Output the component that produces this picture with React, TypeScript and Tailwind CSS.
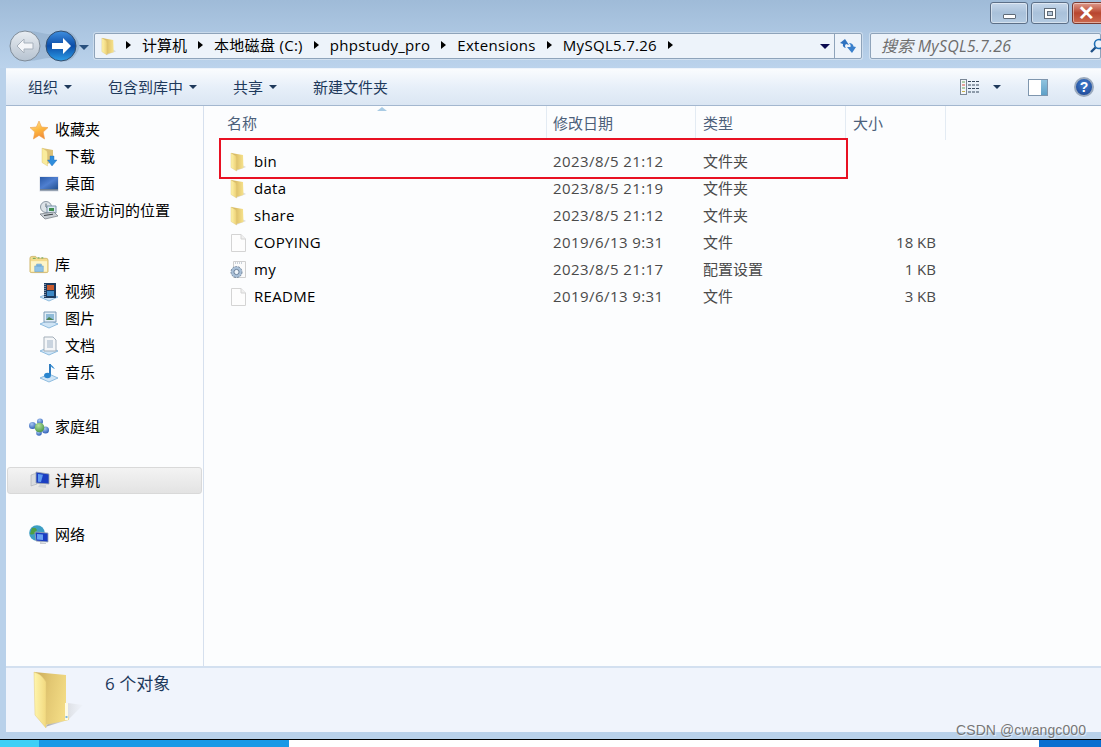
import React from "react";

const F = "font-['Open_Sans','Noto_Sans_CJK_SC',sans-serif]";

function Folder({ w = 18, h = 20, id }: { w?: number; h?: number; id: string }) {
  return (
    <svg width={w} height={h} viewBox="0 0 18 20">
      <defs>
        <linearGradient id={id} x1="0" y1="0" x2="1" y2="0">
          <stop offset="0" stopColor="#fff4ab" />
          <stop offset="1" stopColor="#eccf74" />
        </linearGradient>
        <linearGradient id={id + "b"} x1="0" y1="0" x2="1" y2="0">
          <stop offset="0" stopColor="#c9a853" />
          <stop offset="0.6" stopColor="#e6cb74" />
          <stop offset="1" stopColor="#f7e38d" />
        </linearGradient>
      </defs>
      <path d="M7 19 L17 15 L13 13 L7 15 Z" fill="#bdbdbd" opacity="0.55" />
      <path d="M2 1 L14 3 L14.500 16 L7 18 Z" fill={`url(#${id}b)`} />
      <path d="M2 1 L7 4 L7.500 7 L7.500 19 L2 15.500 Z" fill={`url(#${id})`} stroke="#dcc477" strokeWidth="0.4" />
    </svg>
  );
}

function BigFolder() {
  return (
    <svg width="54" height="60" viewBox="0 0 54 60">
      <defs>
        <linearGradient id="bfa" x1="0" y1="0" x2="1" y2="0">
          <stop offset="0" stopColor="#fff6ad" />
          <stop offset="1" stopColor="#f2d97f" />
        </linearGradient>
        <linearGradient id="bfb" x1="0" y1="0" x2="1" y2="0.3">
          <stop offset="0" stopColor="#c8a958" />
          <stop offset="0.5" stopColor="#e3c873" />
          <stop offset="1" stopColor="#f3dc85" />
        </linearGradient>
        <linearGradient id="bfs" x1="0" y1="0" x2="1" y2="0">
          <stop offset="0" stopColor="#8f8f8f" stopOpacity="0.75" />
          <stop offset="1" stopColor="#cfcfcf" stopOpacity="0.05" />
        </linearGradient>
      </defs>
      <path d="M13 57 L36 50 L51 35 L36 33 Z" fill="url(#bfs)" />
      <path d="M2 2 L34 5 L34 33 L37 50 L13 55 Z" fill="url(#bfb)" />
      <path d="M2 2 Q9 4 12 9 L14 12 L14 58 L3 45 Z" fill="url(#bfa)" stroke="#e3ca7b" strokeWidth="0.5" />
      <rect x="33" y="33" width="3" height="17" fill="#fdfbe6" />
      <rect x="33.500" y="46" width="2" height="2" fill="#7fb6e0" />
    </svg>
  );
}

function FileIcon() {
  return (
    <svg width="16" height="18" viewBox="0 0 16 18">
      <path d="M1.500 .5 H11 L15.500 5 V17.500 H1.500 Z" fill="#fdfdfd" stroke="#d4d4d4" />
      <path d="M11 .5 V5 H15.500" fill="#f0f0f0" stroke="#d4d4d4" />
    </svg>
  );
}

function ConfigIcon() {
  return (
    <svg width="18" height="18" viewBox="0 0 18 18">
      <path d="M4.500 .5 H16.500 V16.500 H4.500 Z" fill="#fbfbfb" stroke="#cfcfcf" />
      <path d="M6 2 h8" stroke="#9aa8b8" strokeDasharray="1 1" />
      <circle cx="7.500" cy="11" r="5.500" fill="#a9c0d8" stroke="#74889e" strokeDasharray="2 1" />
      <circle cx="7.500" cy="11" r="2.600" fill="#eef4fa" stroke="#6c819a" />
    </svg>
  );
}

function Star() {
  return (
    <svg width="20" height="20" viewBox="0 0 20 20">
      <defs>
        <linearGradient id="star" x1="0" y1="0" x2="0.4" y2="1">
          <stop offset="0" stopColor="#ffe9a0" />
          <stop offset="0.6" stopColor="#fdb63f" />
          <stop offset="1" stopColor="#f2903a" />
        </linearGradient>
      </defs>
      <path d="M10 1 L12.600 7 L19 7.600 L14.200 12 L15.600 19 L10 15.400 L4.400 19 L5.800 12 L1 7.600 L7.400 7 Z" fill="url(#star)" stroke="#ef9f4d" strokeWidth="0.6" />
    </svg>
  );
}

function DownloadIcon() {
  return (
    <svg width="18" height="20" viewBox="0 0 18 20">
      <path d="M2 1 L13 3 L13 15 L7 17 Z" fill="#dcc177" />
      <path d="M2 1 L7 4 L7.500 7 L7.500 19 L2 15.500 Z" fill="#f9eb9c" stroke="#d9bf6d" strokeWidth="0.4" />
      <path d="M10 9 H14 V13 H17 L12 19 L7.500 13 H10 Z" fill="#2f8ddc" stroke="#1c6cb8" strokeWidth="0.4" />
    </svg>
  );
}

function Desktop() {
  return (
    <svg width="20" height="16" viewBox="0 0 20 16">
      <defs>
        <linearGradient id="dsk" x1="0" y1="0" x2="1" y2="1">
          <stop offset="0" stopColor="#2a5aa8" />
          <stop offset="0.5" stopColor="#4f7fd0" />
          <stop offset="1" stopColor="#24518f" />
        </linearGradient>
      </defs>
      <rect x="0.5" y="0.5" width="19" height="15" fill="#d5dbe4" />
      <rect x="1" y="1" width="18" height="12" fill="url(#dsk)" />
      <rect x="1" y="13" width="18" height="1.600" fill="#6f7f93" />
    </svg>
  );
}

function Recent() {
  return (
    <svg width="20" height="20" viewBox="0 0 20 20">
      <circle cx="7" cy="6" r="5.500" fill="#dde3e8" stroke="#8c98a3" />
      <path d="M7 2.500 V6 L9.500 7.500" stroke="#56636f" fill="none" />
      <path d="M8 5 H17 V12 H8 Z" fill="#dbe8f3" stroke="#7c93aa" />
      <path d="M10 7 H15 V10 H10 Z" fill="#3f8f4f" />
      <path d="M1 13 L15 11 L19 15 L6 18 Z" fill="#c8ced4" stroke="#70777e" strokeWidth="0.7" />
      <path d="M5 14.500 L14 13.200" stroke="#3a3f44" />
    </svg>
  );
}

function Library() {
  return (
    <svg width="21" height="19" viewBox="0 0 21 19">
      <path d="M1 3 Q1 1 3 1 H7 L9 3 H18 Q20 3 20 5 V17 Q20 18 18 18 H3 Q1 18 1 17 Z" fill="#f4dc8e" stroke="#c9ad5f" strokeWidth="0.8" />
      <path d="M4 3 h3 M9 2.500 h2 M13 2.500 h2" stroke="#7fae5f" strokeWidth="1.400" />
      <path d="M2 6 H19 V17 H2 Z" fill="#fdf5c9" />
      <path d="M6 11 H15 V17 H6 Z M8 9 H13 V11 H8 Z" fill="#8fc3e8" stroke="#5d97c4" strokeWidth="0.5" />
    </svg>
  );
}

function Plate() {
  return <path d="M1 15 L10 11 L19 15 L10 19 Z" fill="#cfe4f5" stroke="#78aed8" strokeWidth="0.8" />;
}

function Videos() {
  return (
    <svg width="20" height="20" viewBox="0 0 20 20">
      <Plate />
      <rect x="5" y="1" width="12" height="15" fill="#1c3a5e" />
      <rect x="8" y="3" width="7" height="5" fill="#c95b2e" />
      <rect x="8" y="9" width="7" height="5" fill="#3d89c6" />
      <path d="M6 2 v13" stroke="#dde6ef" strokeDasharray="1 1" />
    </svg>
  );
}

function Pictures() {
  return (
    <svg width="20" height="20" viewBox="0 0 20 20">
      <Plate />
      <path d="M5 3 H17 V13 H5 Z" fill="#e3eef7" stroke="#7f9cb8" />
      <path d="M7 5 H15 V11 H7 Z" fill="#8fbbd8" />
      <path d="M7 11 L10 8 L15 11 Z" fill="#4b8253" />
    </svg>
  );
}

function Docs() {
  return (
    <svg width="20" height="20" viewBox="0 0 20 20">
      <Plate />
      <path d="M5 1 H14 L17 4 V15 H5 Z" fill="#f4f6f8" stroke="#a4afba" />
      <path d="M8 5 h6 M8 7 h6 M8 9 h6 M8 11 h6" stroke="#9fb2c6" />
    </svg>
  );
}

function Music() {
  return (
    <svg width="20" height="20" viewBox="0 0 20 20">
      <Plate />
      <path d="M11 1 V12" stroke="#1b6fb8" strokeWidth="1.800" />
      <path d="M11 1 Q12 5 16 6 Q14 3 11 1" fill="#2a86cf" />
      <ellipse cx="8.500" cy="12.500" rx="3.400" ry="2.800" fill="#2a86cf" />
    </svg>
  );
}

function Homegroup() {
  return (
    <svg width="20" height="18" viewBox="0 0 20 18">
      <defs>
        <radialGradient id="hgb" cx="0.4" cy="0.3" r="0.8">
          <stop offset="0" stopColor="#a9c8f2" />
          <stop offset="1" stopColor="#1f52b0" />
        </radialGradient>
        <radialGradient id="hgg" cx="0.4" cy="0.3" r="0.8">
          <stop offset="0" stopColor="#b5e0a0" />
          <stop offset="1" stopColor="#3f8f3e" />
        </radialGradient>
      </defs>
      <circle cx="11" cy="3.500" r="3" fill="url(#hgb)" />
      <circle cx="3.500" cy="7.500" r="3.500" fill="url(#hgb)" />
      <circle cx="16.500" cy="12" r="3.500" fill="url(#hgb)" />
      <circle cx="10" cy="15" r="2.800" fill="url(#hgb)" />
      <circle cx="10.500" cy="9.500" r="4.800" fill="url(#hgg)" />
    </svg>
  );
}

function Computer() {
  return (
    <svg width="20" height="20" viewBox="0 0 20 20">
      <path d="M1 4 L7 2 V13 L1 15 Z" fill="#d9dcdf" stroke="#a8adb2" strokeWidth="0.6" />
      <path d="M6 1 L19 3 V13 L6 12 Z" fill="#1a3ec2" stroke="#9aa3ab" strokeWidth="0.8" />
      <path d="M8 3 L13 3.800 L11 11 L8 10.800 Z" fill="#5f9af0" />
      <path d="M10 13 L16 14 V17 L8 16 Z" fill="#cfd3d7" />
    </svg>
  );
}

function Network() {
  return (
    <svg width="20" height="20" viewBox="0 0 20 20">
      <circle cx="8" cy="8" r="7.800" fill="#3d9ec4" />
      <path d="M3 3 Q7 2 8 5 Q5 11 1 9 Z" fill="#4f9f44" />
      <path d="M6 7 L19 8 V17 L7 16 Z" fill="#1a3ec2" stroke="#a2abb2" strokeWidth="0.8" />
      <path d="M8 9 L14 9.400 V15 L8 14.600 Z" fill="#6aa2f2" />
      <path d="M11 17 L17 18 V19 L11 19 Z" fill="#c9cdd1" />
    </svg>
  );
}

function Caret({ c = "#1e395b" }: { c?: string }) {
  return <span className="inline-block w-0 h-0 border-x-[4px] border-x-transparent border-t-[4px]" style={{ borderTopColor: c }} />;
}

function Crumb({ children, latin }: { children?: React.ReactNode; latin?: boolean }) {
  return (
    <>
      <span className="w-0 h-0 border-y-[4.5px] border-y-transparent border-l-[5px] border-l-black mx-[11px]" />
      {children && <span className={`text-[15px] text-black ${latin ? "tracking-[0.3px]" : ""}`}>{children}</span>}
    </>
  );
}

function NavButtons() {
  return (
    <svg width="88" height="36" viewBox="0 0 88 36" className="shrink-0">
      <defs>
        <linearGradient id="back" x1="0" y1="0" x2="0" y2="1">
          <stop offset="0" stopColor="#e8edf2" />
          <stop offset="0.5" stopColor="#cfd7e0" />
          <stop offset="1" stopColor="#b6c3d1" />
        </linearGradient>
        <linearGradient id="fwd" x1="0" y1="0" x2="0" y2="1">
          <stop offset="0" stopColor="#3f8fe0" />
          <stop offset="0.5" stopColor="#0c4da8" />
          <stop offset="1" stopColor="#2d9ee8" />
        </linearGradient>
      </defs>
      <path d="M8 5 Q18 1 34 5 Q44 8 52 3 Q66 0 72 18 Q66 36 52 33 Q44 28 34 31 Q18 35 8 31 Z" fill="#8ea9c6" opacity="0.55" />
      <circle cx="17" cy="18" r="15" fill="url(#back)" stroke="#7f8c99" />
      <path d="M9 18 L16 11 V15 H25 V21 H16 V25 Z" fill="#f4f6f9" stroke="#a7b1bc" />
      <circle cx="53" cy="18" r="15" fill="url(#fwd)" stroke="#35506f" />
      <path d="M63 18 L55 10 V15 H44 V21 H55 V26 Z" fill="#fff" />
      <path d="M71 17 H81 L76 22 Z" fill="#29517f" />
    </svg>
  );
}

function Refresh() {
  return (
    <svg width="18" height="16" viewBox="0 0 18 16">
      <path d="M6 1 L1 5 L4 6 Q3 9 7 10 Q5 8 7 6 L10 7 Z" fill="#2f72bf" />
      <path d="M13 15 L17 9 L14.500 8.500 Q14 5 10 5 Q12.500 7 11.500 9 L8 9 Z" fill="#3a80cc" />
    </svg>
  );
}

function SearchIcon() {
  return (
    <svg width="14" height="16" viewBox="0 0 14 16">
      <circle cx="9" cy="6" r="4.500" fill="#eaf2fa" stroke="#1f6fb5" strokeWidth="1.600" />
      <path d="M5.500 9.500 L1 14" stroke="#1f4f85" strokeWidth="2.400" />
    </svg>
  );
}

function WinBtn({ children, cls }: { children: React.ReactNode; cls: string }) {
  return <div className={`h-[22px] rounded-[3px] border border-[#5c6f87] flex items-center justify-center shadow-[inset_0_0_0_1px_rgba(255,255,255,0.45)] ${cls}`}>{children}</div>;
}

function ToolItem({ label, caret = true, cls }: { label: string; caret?: boolean; cls: string }) {
  return (
    <span className={`flex items-center gap-[6px] text-[15px] text-[#1e395b] ${cls}`}>
      {label}
      {caret && <Caret />}
    </span>
  );
}

function Nav({ icon, label, indent, selected }: { icon: React.ReactNode; label: string; indent?: boolean; selected?: boolean }) {
  return (
    <div
      className={`h-[27px] flex items-center text-[15px] text-black ${
        selected ? "mx-[1px] rounded-[3px] border border-[#d9d9d9] bg-gradient-to-b from-[#f3f3f3] to-[#e3e3e3] pl-[22px]" : indent ? "pl-[33px]" : "pl-[23px]"
      }`}
    >
      <span className="w-[20px] h-[20px] flex items-center justify-center shrink-0">{icon}</span>
      <span className={indent || !selected ? "ml-[6px]" : "ml-[5px]"}>{label}</span>
    </div>
  );
}

const rows = [
  { icon: <Folder id="f1" />, name: "bin", date: "2023/8/5 21:12", type: "文件夹", size: "" },
  { icon: <Folder id="f2" />, name: "data", date: "2023/8/5 21:19", type: "文件夹", size: "" },
  { icon: <Folder id="f3" />, name: "share", date: "2023/8/5 21:12", type: "文件夹", size: "" },
  { icon: <FileIcon />, name: "COPYING", date: "2019/6/13 9:31", type: "文件", size: "18 KB" },
  { icon: <ConfigIcon />, name: "my", date: "2023/8/5 21:17", type: "配置设置", size: "1 KB" },
  { icon: <FileIcon />, name: "README", date: "2019/6/13 9:31", type: "文件", size: "3 KB" },
];

function Head({ label, w, pl }: { label: string; w: string; pl: string }) {
  return <div className={`${w} ${pl} h-[34px] flex items-center border-r border-[#e3ebf3] text-[15px] text-[#4c607a]`}>{label}</div>;
}

export default function App() {
  return (
    <div className={`relative w-[1101px] h-[747px] overflow-hidden flex flex-col bg-[#b9d1ea] ${F}`}>
      <div className="h-[68px] shrink-0 bg-gradient-to-b from-[#9fbbd8] to-[#bbd3ec] flex flex-col">
        <div className="h-[33px] shrink-0 flex justify-end gap-[3px] pt-[2px] -mr-[6px]">
          <WinBtn cls="w-[38px] bg-gradient-to-b from-[#c6d7ea] via-[#a9c1da] to-[#b4cbe2]">
            <span className="mt-[7px] w-[13px] h-[5px] rounded-[1px] bg-white border border-[#5f6b78]" />
          </WinBtn>
          <WinBtn cls="w-[38px] bg-gradient-to-b from-[#c6d7ea] via-[#a9c1da] to-[#b4cbe2]">
            <span className="w-[12px] h-[11px] bg-white border border-[#5f6b78] flex items-center justify-center">
              <span className="w-[6px] h-[5px] bg-[#b6c8da] border border-[#5f6b78]" />
            </span>
          </WinBtn>
          <WinBtn cls="w-[35px] border-[#7a3a30] bg-gradient-to-b from-[#dd9a8c] via-[#b8452e] to-[#cc6a50]">
            <span className="text-white text-[20px] leading-none font-bold -ml-[6px] font-['Liberation_Sans',sans-serif]">✕</span>
          </WinBtn>
        </div>
        <div className="flex items-start h-[26px] pl-[8px]">
          <div className="-mt-[5px]">
            <NavButtons />
          </div>
          <div className="ml-[-2px] w-[768px] h-[26px] rounded-[2px] border border-[#8ea3ba] bg-[#edf3fa] flex items-center pl-[5px] shadow-[0_0_0_1px_rgba(255,255,255,0.35)]">
            <Folder id="fa" w={17} h={19} />
            <span className="flex items-center -ml-[2px] pb-[2px]">
              <Crumb>计算机</Crumb>
              <Crumb latin>本地磁盘 (C:)</Crumb>
              <Crumb latin>phpstudy_pro</Crumb>
              <Crumb latin>Extensions</Crumb>
              <Crumb latin>MySQL5.7.26</Crumb>
              <Crumb />
            </span>
            <span className="ml-auto flex items-center h-full">
              <span className="w-0 h-0 border-x-[5px] border-x-transparent border-t-[5px] border-t-[#0a0a50] mr-[4px]" />
              <span className="w-[27px] h-full border-l border-[#8ea3ba] flex items-center justify-center">
                <Refresh />
              </span>
            </span>
          </div>
          <div className="ml-[8px] flex-1 h-[26px] rounded-[2px] border border-[#8ea3ba] bg-[#edf3fa] flex items-center pl-[10px] pr-0 shadow-[0_0_0_1px_rgba(255,255,255,0.35)]">
            <span className="italic text-[16px] text-[#6d6d6d] tracking-[0.2px]">搜索 MySQL5.7.26</span>
            <span className="ml-auto -mr-[4px]">
              <SearchIcon />
            </span>
          </div>
        </div>
      </div>

      <div className="flex-1 flex flex-col pl-[6px] min-h-0">
        <div className="h-[38px] shrink-0 bg-gradient-to-b from-[#fafcfe] via-[#e7eff9] to-[#dbe6f3] border-t border-t-[#eef4fb] border-b border-b-[#a3b7cf] flex items-center">
          <ToolItem label="组织" cls="ml-[22px]" />
          <ToolItem label="包含到库中" cls="ml-[36px]" />
          <ToolItem label="共享" cls="ml-[36px]" />
          <ToolItem label="新建文件夹" caret={false} cls="ml-[36px]" />
          <div className="ml-auto flex items-center">
            <svg width="20" height="16" viewBox="0 0 20 16">
              <rect x="0.5" y="0.5" width="6" height="15" fill="#f3f6f9" stroke="#7a8796" />
              <path d="M2 3 h3" stroke="#6ea85f" />
              <path d="M2 6 h3" stroke="#d9503f" />
              <path d="M2 9 h3" stroke="#6ea85f" />
              <path d="M2 12.500 h3" stroke="#c5b04d" />
              <path d="M8 2.500 h12 M8 6 h12 M8 9.500 h12 M8 13 h12" stroke="#37485c" strokeDasharray="3 1" />
            </svg>
            <span className="ml-[13px] flex"><Caret /></span>
            <span className="ml-[27px] w-[20px] h-[17px] border border-[#7f96ae] bg-white flex justify-end">
              <span className="w-[6px] bg-gradient-to-b from-[#8fc3de] to-[#5ea0c8]" />
            </span>
            <span className="ml-[26px] mr-[7px] w-[20px] h-[20px] rounded-full bg-[radial-gradient(circle_at_50%_35%,#3f7fd0,#1b3f8c)] border-2 border-[#9aa9bd] text-white text-[14px] font-bold leading-none flex items-center justify-center font-['Liberation_Sans',sans-serif]">?</span>
          </div>
        </div>

        <div className="flex-1 min-h-0 flex bg-[#fcfdfe]">
          <div className="w-[198px] shrink-0 border-r border-[#d6e0ee] pt-[10px]">
            <Nav icon={<Star />} label="收藏夹" />
            <Nav icon={<DownloadIcon />} label="下载" indent />
            <Nav icon={<Desktop />} label="桌面" indent />
            <Nav icon={<Recent />} label="最近访问的位置" indent />
            <div className="h-[27px]" />
            <Nav icon={<Library />} label="库" />
            <Nav icon={<Videos />} label="视频" indent />
            <Nav icon={<Pictures />} label="图片" indent />
            <Nav icon={<Docs />} label="文档" indent />
            <Nav icon={<Music />} label="音乐" indent />
            <div className="h-[27px]" />
            <Nav icon={<Homegroup />} label="家庭组" />
            <div className="h-[27px]" />
            <Nav icon={<Computer />} label="计算机" selected />
            <div className="h-[27px]" />
            <Nav icon={<Network />} label="网络" />
          </div>
          <div className="flex-1 min-w-0 pl-[16px]">
            <div className="relative flex">
              <Head label="名称" w="w-[327px]" pl="pl-[7px]" />
              <Head label="修改日期" w="w-[149px]" pl="pl-[6px]" />
              <Head label="类型" w="w-[150px]" pl="pl-[7px]" />
              <Head label="大小" w="w-[100px]" pl="pl-[7px]" />
              <span className="absolute left-[157px] top-[1px] w-0 h-0 border-x-[5px] border-x-transparent border-b-[4px] border-b-[#a9cbe4]" />
            </div>
            <div className="pt-[8px]">
              {rows.map((r) => (
                <div key={r.name} className="h-[27px] flex items-center text-[15px] text-black">
                  <div className="w-[327px] flex items-center pl-[9px]">
                    <span className="w-[18px] h-[20px] flex items-center justify-center">{r.icon}</span>
                    <span className="ml-[7px] tracking-[0.3px]">{r.name}</span>
                  </div>
                  <div className="w-[150px] pl-[6px] text-[#4a4a4a] tracking-[0.43px]">{r.date}</div>
                  <div className="w-[150px] pl-[6px] text-[#4a4a4a]">{r.type}</div>
                  <div className="w-[89px] text-right text-[#4a4a4a]">{r.size}</div>
                </div>
              ))}
            </div>
          </div>
        </div>

        <div className="h-[66px] shrink-0 bg-[#f0f4fc] border-t-2 border-[#d3e0f0] flex">
          <div className="pl-[26px] pt-[2px]">
            <BigFolder />
          </div>
          <div className="ml-[19px] pt-[3px] text-[17px] text-[#1e395b]">6 个对象</div>
        </div>
      </div>

      <div className="h-[7px] shrink-0 bg-[#b9d1ea]" />
      <div className="h-[1px] shrink-0 bg-black" />
      <div className="h-[7px] shrink-0 flex bg-white">
        <div className="w-[39px] bg-[#3dd0f6]" />
        <div className="w-[250px] bg-[#1899e6]" />
        <div className="flex-1" />
        <div className="w-[62px] bg-[#0a6fd0]" />
      </div>

      <div className="absolute left-[219px] top-[138px] w-[629px] h-[41px] border-2 border-[#e81123]" />
      <div className="absolute left-[956px] top-[721px] text-[14px] leading-[18px] tracking-[0.1px] text-[#777] [text-shadow:1px_1px_1px_rgba(255,255,255,0.7)] font-['Liberation_Sans',sans-serif]">
        CSDN @cwangc000
      </div>
    </div>
  );
}
